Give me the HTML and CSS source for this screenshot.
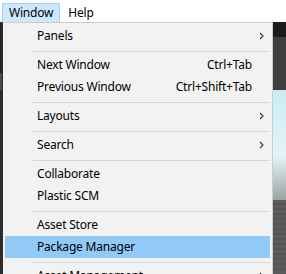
FILE: index.html
```html
<!DOCTYPE html>
<html lang="ko">
<head>
  <meta charset="UTF-8">
  <meta name="viewport" content="width=device-width, initial-scale=1.0">
  <title>Window menu</title>
  <link rel="stylesheet" href="styles.css">
</head>
<body>

  <nav class="menubar">
    <span class="menubar-item open">Window</span>
    <span class="menubar-item">Help</span>
  </nav>

  <div class="workspace">
    <div class="left-strip"></div>
    <div class="editor-gap"></div>
    <div class="scene">
      <div class="scene-toolbar"></div>
      <div class="scene-tabs"></div>
      <div class="scene-sky"></div>
      <div class="scene-ground"></div>
    </div>

    <!-- dropdown opened from "Window" -->
    <ul class="dropdown">
      <li class="item">Panels<span class="shortcut"></span><span class="arrow"><svg viewBox="0 0 5 8"><polyline points="1,1 4,4 1,7"/></svg></span></li>
      <li class="sep"></li>
      <li class="item">Next Window<span class="shortcut">Ctrl+Tab</span><span class="arrow"></span></li>
      <li class="item">Previous Window<span class="shortcut">Ctrl+Shift+Tab</span><span class="arrow"></span></li>
      <li class="sep"></li>
      <li class="item">Layouts<span class="shortcut"></span><span class="arrow"><svg viewBox="0 0 5 8"><polyline points="1,1 4,4 1,7"/></svg></span></li>
      <li class="sep"></li>
      <li class="item">Search<span class="shortcut"></span><span class="arrow"><svg viewBox="0 0 5 8"><polyline points="1,1 4,4 1,7"/></svg></span></li>
      <li class="sep"></li>
      <li class="item">Collaborate<span class="shortcut"></span><span class="arrow"></span></li>
      <li class="item">Plastic SCM<span class="shortcut"></span><span class="arrow"></span></li>
      <li class="sep"></li>
      <li class="item">Asset Store<span class="shortcut"></span><span class="arrow"></span></li>
      <li class="item active">Package Manager<span class="shortcut"></span><span class="arrow"></span></li>
      <li class="sep"></li>
      <li class="item">Asset Management<span class="shortcut"></span><span class="arrow"><svg viewBox="0 0 5 8"><polyline points="1,1 4,4 1,7"/></svg></span></li>
    </ul>
  </div>

</body>
</html>
```

FILE: styles.css
```css
:root {
  --menu-bg: #f2f2f2;
  --menu-border: #cccccc;
  --sep: #d7d7d7;
  --hover: #91c9f7;
  --bar-open: #cce8ff;
  --bar-open-border: #99d1ff;
}

html, body {
  margin: 0;
  height: 100%;
}

body {
  font-family: "Noto Sans", "Noto Sans CJK KR", sans-serif;
  font-size: 12px;
  letter-spacing: -0.2px;
  color: #000;
  background: #282828;
  display: flex;
  flex-direction: column;
  overflow: hidden;
}

/* Top menu bar */
.menubar {
  height: 22px;
  background: #ffffff;
  display: flex;
  align-items: flex-end;
  padding-left: 2px;
  flex-shrink: 0;
}

.menubar-item {
  height: 19px;
  line-height: 17px;
  padding: 0 6px;
  border: 1px solid transparent;
  box-sizing: border-box;
}

.menubar-item.open {
  background: var(--bar-open);
  border-color: var(--bar-open-border);
  border-bottom: none;
  margin-right: 1px;
}

/* Editor behind the menu */
.workspace {
  position: relative;
  flex: 1;
  display: flex;
}

.left-strip {
  width: 2px;
  background: linear-gradient(#262626 0, #262626 51px, #4a4a4a 51px, #4a4a4a 68px, #2c2c2c 68px);
}

.editor-gap {
  flex: 1;
  background: #2a2a2a;
}

.scene {
  width: 13px;
  display: flex;
  flex-direction: column;
}

.scene-toolbar {
  height: 15px;
  background: #1b1b1b;
}

.scene-tabs {
  height: 53px;
  background: #3f3f3f;
}

.scene-sky {
  height: 110px;
  background: linear-gradient(#c9ecf4, #e4f4f6 60%, #9aa2a4);
}

.scene-ground {
  flex: 1;
  background: repeating-linear-gradient(#5c5c5c 0, #5c5c5c 3px, #545454 3px, #545454 5px);
}

/* Dropdown */
.dropdown {
  position: absolute;
  top: 0;
  left: 2px;
  width: 271px;
  margin: 0;
  padding: 2px 2px;
  list-style: none;
  box-sizing: border-box;
  background: var(--menu-bg);
  border: 1px solid var(--menu-border);
  border-left-color: #2f2f2f;
}

.item {
  display: grid;
  grid-template-columns: 1fr auto 18px;
  align-items: center;
  height: 22px;
  padding: 0 0 2px 32px;
  box-sizing: border-box;
  white-space: nowrap;
}

.item.active {
  background: var(--hover);
}

.shortcut {
  text-align: right;
}

.arrow {
  display: flex;
  justify-content: center;
  padding-top: 2px;
}

.arrow svg {
  width: 5px;
  height: 8px;
  fill: none;
  stroke: #333;
  stroke-width: 1.1;
}

.sep {
  height: 1px;
  margin: 4px 0 2px 28px;
  background: var(--sep);
}
```
